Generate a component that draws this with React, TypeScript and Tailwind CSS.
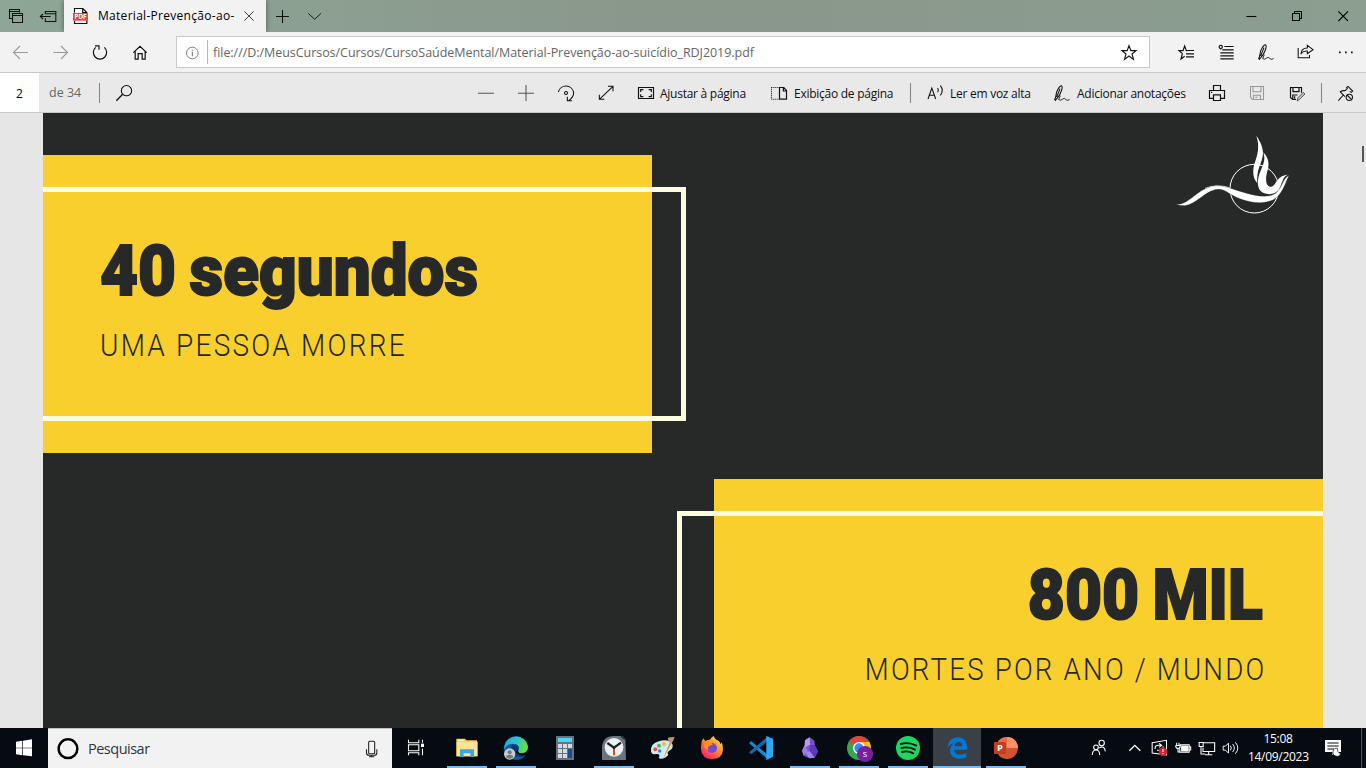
import React from "react";

type GlyphProps = {
  box: string;
  w: number;
  h: number;
  className?: string;
  stroke?: string;
  children: React.ReactNode;
};

// Line glyph drawn on a grid of three units per CSS pixel.
function Glyph({ box, w, h, className = "", stroke = "#111", children }: GlyphProps) {
  return (
    <svg
      viewBox={box}
      width={w}
      height={h}
      className={"block shrink-0 " + className}
      fill="none"
      stroke={stroke}
      strokeWidth="3.2"
    >
      {children}
    </svg>
  );
}

function TitleBar() {
  return (
    <div className="flex h-8 shrink-0 bg-linear-to-r from-[#8da695] via-[#8a978b] to-[#8b9e8f]">
      <Glyph box="0 0 192 96" w={64} h={32}>
        <path d="M28.500 28.500h30v9M28.500 28.500v27h9M28 34.500h30" />
        <path d="M37.500 40.500h30v27h-30zM37 46.500h30" />
        <path d="M136 43V34.500h31.500V64.500H136V55M136 41.500h31M121 49.500h31M129 42l-8 7.500 8 7.500" />
      </Glyph>
      <div className="flex w-[202px] items-center bg-[#f2f2f2] shadow-[0_0_5px_rgba(0,0,0,0.45)]">
        <Glyph box="192 0 99 96" w={33} h={32}>
          <path d="M223.500 38V25.500h25l12 12V70.500h-37V62M248 25v13h12" fill="#fff" strokeWidth="3.500" />
          <path d="M219 39h45v23h-45z" fill="#f43f3f" stroke="none" />
          <text
            x="241.500"
            y="57.500"
            textAnchor="middle"
            fontSize="19"
            fontWeight="700"
            fill="#fff"
            stroke="none"
          >
            PDF
          </text>
        </Glyph>
        <span className="w-[142px] overflow-hidden pl-px text-[12px] tracking-[0.290px] whitespace-nowrap text-black">
          Material-Prevenção-ao-
        </span>
        <Glyph box="717 0 81 96" w={27} h={32} stroke="#444">
          <path d="M733 34l28 28M761 34l-28 28" strokeWidth="3" />
        </Glyph>
      </div>
      <Glyph box="798 0 192 96" w={64} h={32}>
        <path d="M828 49.500h39M847.500 30v39" />
        <path d="M925 40l19 18 19-18" strokeWidth="2.800" />
      </Glyph>
      <div className="grow" />
      <Glyph box="543 0 405 96" w={135} h={32} stroke="#000">
        <path d="M589 49.500h30" />
        <path d="M727.500 40.500h21v21h-21zM733.500 40v-5.500h21v21h-6" />
        <path d="M865 34l29 29M894 34l-29 29" />
      </Glyph>
    </div>
  );
}

function PenGlyph() {
  return (
    <>
      <path d="M628 172L632 153Q639 135 646 134Q651 136 646 150Q641 164 633 172L628 178L626 175zM632 168L642 143" />
      <path d="M643 164L638 176Q645 180 650 174Q656 168 661 177Q666 180 671 175" strokeWidth="2.600" />
    </>
  );
}

function AddressBar() {
  return (
    <div className="flex h-10 shrink-0 items-center bg-[#f2f2f2]">
      <Glyph box="0 96 528 120" w={176} h={40}>
        <path d="M84 157.500H41M60 138l-19.500 19.500L60 177M160 157.500h43M183 138l19.500 19.500L183 177" stroke="#999" />
        <path d="M287 142A20 20 0 1 0 313 142M285 137.500h12V149" strokeWidth="3.500" />
        <path d="M400 158L420 139L440 158M405.500 154v23.500h9V161h12v16.500h9V154" strokeWidth="3.600" />
      </Glyph>
      <div className="flex h-8 w-[974px] items-center border border-[#c9c9c9] bg-white">
        <Glyph box="531 111 108 90" w={36} h={30} stroke="#777">
          <circle cx="577" cy="159" r="17.500" strokeWidth="2.800" />
          <path d="M577 155v14M577 149v3" />
          <path d="M622.500 120v72" stroke="#bbb" />
        </Glyph>
        <span className="pt-[2px] text-[12.500px] tracking-[-0.045px] whitespace-nowrap text-[#666]">
          file:///D:/MeusCursos/Cursos/CursoSaúdeMental/Material-Prevenção-ao-suicídio_RDJ2019.pdf
        </span>
        <div className="grow" />
        <Glyph box="207 111 90 90" w={30} h={30}>
          <path d="M237 137l5.500 15H258l-12 10 4.500 16L237 168l-13.500 10 4.500-16-12-10h15.500z" strokeWidth="3.400" />
        </Glyph>
      </div>
      <Glyph box="300 96 648 120" w={216} h={40}>
        <path
          d="M412 152h-3l-5-14-5 14h-12l10 9-4 16 11-8M412 151.500h20M408 161.500h24M408 170.500h24"
          strokeWidth="3.500"
        />
        <path
          d="M523 139.500h28M517 149.500h34M511 158.500h40M511 167.500h40M511 176.500h40M514 148q-10-6-5-11 6-3 8 3 0 6-5 5"
          strokeWidth="3.500"
        />
        <PenGlyph />
        <path d="M744.500 144v29.500h34V165M753 163q0-19 19-19v-8l17 13-17 12v-8q-12-1-19 8z" />
        <path d="M867 157h5M885 157h5M903 157h5" strokeWidth="5" />
      </Glyph>
    </div>
  );
}

function ToolLabel({ className, children }: { className: string; children: string }) {
  return (
    <div className={"pt-[3px] text-[12px] tracking-[-0.260px] whitespace-nowrap text-[#111] " + className}>
      {children}
    </div>
  );
}

function PdfToolbar() {
  return (
    <div className="flex h-[41px] shrink-0 items-center border-y border-[#c9c9c9] bg-[#e9e9e9]">
      <div className="flex h-full w-[39px] items-center justify-center bg-white pt-[2px] text-[12px] text-black">
        2
      </div>
      <div className="w-[48px] pt-[2px] pl-[10px] text-[12.500px] whitespace-nowrap text-[#666]">de 34</div>
      <Glyph box="261 219 159 117" w={53} h={39}>
        <path d="M298.500 249v60" stroke="#888" />
        <circle cx="379.500" cy="272" r="15.500" />
        <path d="M368 283l-19 19" strokeWidth="4" />
      </Glyph>
      <div className="grow" />
      <Glyph box="18 3 582 117" w={194} h={39}>
        <path d="M54 63.500h48M174 63.500h48M198 39v48" stroke="#555" />
        <path d="M295 60A23.500 23.500 0 0 1 341 62Q341 75 327 85M322 74v12.500h14" />
        <circle cx="318" cy="63" r="4.500" />
        <path d="M418 82L459 43M444 43h15v15M418 68v14h15" />
        <path
          d="M535.500 46.500h45v33h-45zM542 60v-7h8M566 53h8v7M542 67v7h8M566 74h8v-7"
          strokeWidth="3.500"
        />
      </Glyph>
      <ToolLabel className="w-[103px]">Ajustar à página</ToolLabel>
      <Glyph box="909 3 93 117" w={31} h={39}>
        <path d="M934.500 46v35M934 46.500h22M934 81.500h22" strokeDasharray="3 3" />
        <path d="M958.500 46.500h13l8 9v26h-21zM970 46v11h10" strokeWidth="3.600" />
      </Glyph>
      <ToolLabel className="w-[106px]">Exibição de página</ToolLabel>
      <Glyph box="0 3 150 117" w={50} h={39}>
        <path d="M31.500 33v60" stroke="#888" />
        <path d="M84 81L95.500 48L107 81M88 70h15M113 48q4 6 0 13M121 41q12 14 0 29" />
      </Glyph>
      <ToolLabel className="w-[100px]">Ler em voz alta</ToolLabel>
      <Glyph box="0 219 81 117" w={27} h={39}>
        <g transform="translate(-612 123)">
          <PenGlyph />
        </g>
      </Glyph>
      <ToolLabel className="w-[129px]">Adicionar anotações</ToolLabel>
      <Glyph box="468 219 480 117" w={160} h={39}>
        <path
          d="M490.500 271v-14.500h21V271M489 295h-10.500V271.500h45V295H513M490.500 284.500h21v17h-21zM483 277h4"
          strokeWidth="3.600"
        />
        <path d="M601.500 259.500h39v39h-33l-6-6zM609 260v15h24v-15M610.500 298v-12h21v12M616 292h7" stroke="#999" />
        <path
          d="M738 298.500H728l-6.500-6V262.500h33V278M729 263v12h18v-12M728.500 298v-13h14M734 289v7"
          strokeWidth="3.600"
        />
        <path d="M741 303l3-10 16-16 5 5-16 16z" stroke="#555" fill="#bbb" strokeWidth="2.800" />
        <path d="M814.500 249v60" stroke="#888" />
        <path d="M865 302l15-17M870 275q8-4 15-3l7-6-2-4 4-3 14 14-4 4-5-3M870 275l15 15" />
        <circle cx="898" cy="292" r="9.500" />
        <path d="M891 285l14 14" />
      </Glyph>
    </div>
  );
}

function BirdLogo() {
  return (
    <svg viewBox="0 0 420 300" className="mt-3 h-[100px] w-[140px]" fill="#fff">
      <circle cx="283" cy="191" r="73" fill="none" stroke="#fff" strokeWidth="3" />
      <path d="M289 32C305 55 313 78 307 98C303 118 289 134 292 175C279 160 277 139 283 117C293 89 300 65 289 32Z" />
      <path d="M310 82C328 100 328 120 322 139C315 164 318 184 331 185C350 186 345 153 383 149C366 156 367 178 356 194C347 207 326 211 311 204C289 195 290 163 302 137C311 116 317 102 310 82Z" />
      <path
        d="M48 238C83 240 106 201 143 188C181 174 208 190 244 200C284 212 325 222 349 203C367 188 366 163 387 151C377 171 370 200 349 218C322 240 278 235 242 222C208 210 197 192 174 193C135 196 110 239 73 242Q56 242 48 238Z"
        stroke="#272928"
        strokeWidth="1"
      />
      <path d="M135 190Q170 176 208 188" fill="none" stroke="#fff" strokeWidth="2" />
    </svg>
  );
}

function Slide() {
  const heading =
    "font-[Roboto] text-[70px] leading-[72px] font-black whitespace-nowrap [-webkit-text-stroke:2px_#272928]";
  const caption =
    "mt-[19px] font-[Roboto] text-[31.500px] leading-[40px] font-light tracking-[2.500px] whitespace-nowrap";
  return (
    <div className="flex h-[615px] shrink-0 overflow-hidden bg-[#e6e6e6]">
      <div className="ml-[43px] flex w-[1280px] flex-col bg-[#272928] pt-[42px] text-[#272928]">
        <div className="flex justify-between">
          <section className="relative h-[297.5px] w-[609px] bg-[#f9cf2d] pt-[80px] pl-[57px]">
            <div className="absolute top-8 left-0 h-[234px] w-[643px] border-y-5 border-r-5 border-[#fffde0]" />
            <h1 className={heading}>
              <span className="inline-block origin-left scale-x-[0.937] [word-spacing:-3px]">40 segundos</span>
            </h1>
            <p className={caption}>
              <span className="inline-block origin-left scale-x-[0.889]">UMA PESSOA MORRE</span>
            </p>
          </section>
          <div className="-mt-[42px] mr-[23px]">
            <BirdLogo />
          </div>
        </div>
        <section className="relative mt-[26.5px] ml-auto h-[249px] w-[609.5px] shrink-0 bg-[#f9cf2d] pt-[80px] pr-[58px] text-right">
          <div className="absolute top-8 right-0 h-[234px] w-[646px] border-y-5 border-l-5 border-[#fffde0]" />
          <h1 className={heading}>
            <span className="mr-[2px] inline-block origin-right scale-x-[0.915] [word-spacing:-3px]">800 MIL</span>
          </h1>
          <p className={caption}>
            <span className="-mr-px inline-block origin-right scale-x-[0.878]">MORTES POR ANO / MUNDO</span>
          </p>
        </section>
      </div>
      <div className="flex grow justify-end pt-[33px] pr-[2px]">
        <div className="h-4 w-[2px] bg-[#555]" />
      </div>
    </div>
  );
}

type AppCellProps = { x: number; open?: boolean; active?: boolean; children: React.ReactNode };

function AppCell({ x, open, active, children }: AppCellProps) {
  return (
    <svg viewBox={`${x} 6 147 120`} width="49" height="40" className="block shrink-0">
      {active && <path d={`M${x + 3} 6h144v120h-144z`} fill="#3b4047" />}
      {children}
      {open && <path d={`M${x + 15} 120h120v6h-120z`} fill="#76b9ed" />}
      {active && <path d={`M${x + 3} 120h144v6h-144z`} fill="#76b9ed" />}
    </svg>
  );
}

function Taskbar() {
  return (
    <div className="flex h-10 shrink-0 items-center bg-[#060b12]">
      <svg viewBox="0 6 144 120" width="48" height="40" className="shrink-0" fill="#fff">
        <path d="M48 47l19-3v21H48zM69 44l27-4v25H69zM48 67h19v21l-19-3zM69 67h27v24l-27-3z" />
      </svg>
      <div className="flex h-10 w-[344px] items-center border-t border-[#c4c4c4] bg-[#f2f2f2]">
        <Glyph box="144 6 120 120" w={40} h={40}>
          <circle cx="204" cy="65" r="28" stroke="#000" strokeWidth="7.500" />
        </Glyph>
        <span className="text-[14.500px] tracking-[-0.500px] text-[#2b3844]">Pesquisar</span>
        <div className="grow" />
        <Glyph box="1056 6 120 120" w={40} h={40} stroke="#222">
          <rect x="1106" y="43" width="18" height="37" rx="3" />
          <path d="M1099.500 67v10q0 8 8 8h15q8 0 8-8V67M1115 85v6M1107 89.500h16" />
        </Glyph>
      </div>
      <Glyph box="1176 6 150 120" w={50} h={40} stroke="#fff">
        <path d="M1225.500 41v9h31v-9M1225.500 56.500h31v18h-31zM1225.500 88v-8h31v8M1267.500 41v9M1267.500 68v20" />
        <path d="M1263 53h9v10h-9z" fill="#fff" stroke="none" />
      </Glyph>

      <AppCell x={6} open>
        <path d="M49 38h26l5 5h31v48H49z" fill="#f5c644" />
        <path d="M50 47h63v44H50z" fill="#ffe395" />
        <path d="M54 41h18v4H54z" fill="#fff3c0" />
        <path d="M60 93V70h42v23H91V82H71v11z" fill="#35a9e0" />
      </AppCell>
      <AppCell x={153} open>
        <defs>
          <linearGradient id="edgeTop" x1="0" x2="1" y1="0" y2=".4">
            <stop offset="0" stopColor="#23a8e8" />
            <stop offset=".5" stopColor="#2ac3c8" />
            <stop offset="1" stopColor="#66dc4c" />
          </linearGradient>
        </defs>
        <circle cx="228" cy="66" r="36" fill="#0c59a4" />
        <path
          d="M193 62A36 36 0 0 1 264 61Q264 82 241 82Q228 79 235 70Q238 54 219 53Q200 53 193 72z"
          fill="url(#edgeTop)"
        />
        <path d="M216 55Q239 53 236 69Q232 76 238 81Q249 86 262 79L252 92Q217 96 214 72Q213 61 216 55z" fill="#083b75" />
        <path d="M236 69Q230 78 240 82Q254 85 265 73V88H255Q243 91 231 84Q224 76 236 69z" fill="#060b12" />
        <circle cx="209" cy="84" r="17" fill="#c9cdd0" />
        <circle cx="209" cy="79" r="6" fill="#777" />
        <path d="M198 94q0-8 11-8t11 8q-10 8-22 0z" fill="#777" />
      </AppCell>
      <AppCell x={300}>
        <path d="M348 30h54v72h-54z" fill="#66727d" />
        <path d="M354 36h42v12h-42z" fill="#4fd4fa" />
        <path
          d="M354 54h12v12h-12zM369 54h12v12h-12zM384 54h12v12h-12zM354 69h12v12h-12zM369 69h12v12h-12zM354 84h12v12h-12zM369 84h12v12h-12z"
          fill="#d4dce2"
        />
        <path d="M384 69h12v27h-12z" fill="#164c94" />
      </AppCell>
      <AppCell x={447} open>
        <path d="M486 102V64Q488 30 522 30h24l10 9 2 63z" fill="#6b757e" />
        <path d="M540 32l7-3 8 7v7z" fill="#333" />
        <circle cx="522" cy="64" r="28" fill="#eef0f2" />
        <path d="M502 51l20 14 21-15" fill="none" stroke="#222" strokeWidth="7" />
        <path d="M522 64v5" stroke="#222" strokeWidth="7" />
        <path d="M522 69v19" stroke="#e34a16" strokeWidth="6" />
      </AppCell>
      <AppCell x={594}>
        <path
          d="M633 77Q630 53 657 46Q685 37 697 54Q702 67 687 75Q680 80 685 87Q673 101 656 97Q663 82 648 84Q636 87 633 77z"
          fill="#cfe9f7"
        />
        <circle cx="646" cy="70" r="6" fill="#e85746" />
        <circle cx="657" cy="59" r="6" fill="#59b649" />
        <circle cx="672" cy="54" r="6" fill="#f3b832" />
        <circle cx="659" cy="75" r="5" fill="#3184cc" />
        <path d="M668 101l24-58 6 3z" fill="#e88e2b" />
        <path d="M683 36q11-4 21-2-2 10-10 17l-8-5z" fill="#c39263" />
      </AppCell>
      <AppCell x={741}>
        <defs>
          <linearGradient id="fire" x1="1" x2=".2" y1="0" y2="1">
            <stop offset="0" stopColor="#fff44f" />
            <stop offset=".45" stopColor="#ff9525" />
            <stop offset="1" stopColor="#fa196f" />
          </linearGradient>
        </defs>
        <path
          d="M784 55Q784 43 790 37l6 8q7-4 14-4 4-8 11-11 2 7 8 11 11 4 13 14 3-4 2-8 6 10 5 24Q847 99 816 99T783 69q-1-7 1-14z"
          fill="url(#fire)"
        />
        <circle cx="816" cy="66" r="15" fill="#7548d7" />
        <path d="M790 47q18-3 29 9-8 0-12 5-6 4-2 12-14-4-15-26z" fill="#ff8f24" />
      </AppCell>
      <AppCell x={-12}>
        <path d="M27 51l7-5L85 88v13z" fill="#168bd2" />
        <path d="M27 79l7 5L85 43V30z" fill="#0b6eb5" />
        <path d="M79 30l20 8v54l-20 10z" fill="#2ca9f4" />
      </AppCell>
      <AppCell x={135} open>
        <path d="M209 34l14 10 2 15 9 17-10 19-16 2-17-8-5-15 8-18 1-13z" fill="#7751c9" />
        <path d="M209 34l-14 9-1 22 16-9z" fill="#b69af0" />
        <path d="M194 58l-8 16 5 15 13-14z" fill="#9c7ee0" />
        <path d="M210 56l15 3 9 17-10 19-15-20z" fill="#6136b8" />
        <path d="M196 80l13-5 15 20-16 2z" fill="#a385e8" />
      </AppCell>
      <AppCell x={282} open>
        <circle cx="357" cy="66" r="36" fill="#35a553" />
        <path d="M357 66L326 48A36 36 0 0 1 388 48z" fill="#e94235" />
        <path d="M357 48h31A36 36 0 0 1 357 102L373 75z" fill="#fbc116" />
        <circle cx="357" cy="66" r="18" fill="#fff" />
        <circle cx="357" cy="66" r="14" fill="#4285f4" />
        <circle cx="375" cy="84" r="24" fill="#7b1fa2" />
        <text x="375" y="92" textAnchor="middle" fontSize="24" fill="#fff">S</text>
      </AppCell>
      <AppCell x={429} open>
        <circle cx="504" cy="66" r="36" fill="#1ed760" />
        <path
          d="M482 54q25-7 47 5M484 66q22-6 41 5M486 78q18-5 34 4"
          fill="none"
          stroke="#07130b"
          strokeWidth="5.500"
          strokeLinecap="round"
        />
      </AppCell>
      <AppCell x={576} active>
        <path
          d="M622 65Q626 34 655 34Q682 36 682 71H642Q644 86 660 86Q671 86 679 81V94Q669 99 654 98Q629 94 630 72Q631 60 641 51Q629 54 622 65zM643 61H667Q667 48 656 47Q645 49 643 61z"
          fill="#0078d7"
          fillRule="evenodd"
        />
      </AppCell>
      <AppCell x={723} open>
        <circle cx="801" cy="66" r="33" fill="#d35230" />
        <path d="M801 66V33A33 33 0 0 1 834 66z" fill="#ff8f6b" />
        <path d="M801 33A33 33 0 0 0 768 66h33z" fill="#ed6c47" />
        <rect x="762" y="48" width="36" height="36" rx="2" fill="#c43e1c" />
        <text x="780" y="76" textAnchor="middle" fontSize="28" fontWeight="700" fill="#fff">P</text>
      </AppCell>

      <div className="grow" />
      <Glyph box="30 6 504 120" w={168} h={40} stroke="#fff">
        <circle cx="95" cy="51" r="8" />
        <circle cx="78" cy="64" r="7" />
        <path d="M67 87q0-15 11-15t11 15M88 66q15-10 18 10" />
        <path d="M178 74l16.500-16L211 74" strokeWidth="4" />
        <path d="M246.500 50l43-7v44l-43-6zM255 69q0-11 10-11h9M267 52l8 6-8 6M279 61q1 12-9 12h-9" />
        <circle cx="279" cy="77" r="13" fill="#d91f32" stroke="none" />
        <path d="M279 69v9M279 81v4" />
        <path d="M329.500 56.500h28v22h-28v-10M358 62h4v10h-4M320 50v7M327 50v7M317 58.500h14q0 9-7 9t-7-9M324 68v10h5" />
        <path d="M335 60h19v15h-19z" fill="#fff" />
        <path d="M399 50.500h35v26h-35v-11M416 77v9M405 86.500h22M387.500 49.500h12v12h-12zM393 62v22h12" />
        <path
          d="M459.500 60.500h7l9-9v30l-9-9h-7zM481 59q6 7 0 14M488 54q10 12 0 24M496 49q15 17 0 34"
          strokeWidth="2.800"
        />
      </Glyph>
      <div className="w-[70px] pr-[10px] text-center text-[12px] leading-[18px] tracking-[-0.300px] text-white">
        <div className="whitespace-nowrap">15:08</div>
        <div className="whitespace-nowrap">14/09/2023</div>
      </div>
      <svg viewBox="744 6 144 120" width="48" height="40" className="shrink-0">
        <path d="M765 42h48v36h-17l-9 10V78h-22z" fill="#fff" />
        <path d="M772 51h34M772 60h34M772 69h20" stroke="#060b12" strokeWidth="3" />
        <path d="M803 67a12 12 0 1 0 9 16 14 14 0 0 1-9-16z" fill="#fff" stroke="#060b12" strokeWidth="2" />
        <path d="M875 6v120" stroke="#555b62" strokeWidth="3" />
      </svg>
    </div>
  );
}

export default function App() {
  return (
    <main className="flex h-[768px] w-[1366px] flex-col overflow-hidden bg-[#f2f2f2] font-['Open_Sans','Noto_Sans',sans-serif]">
      <TitleBar />
      <AddressBar />
      <PdfToolbar />
      <Slide />
      <Taskbar />
    </main>
  );
}
